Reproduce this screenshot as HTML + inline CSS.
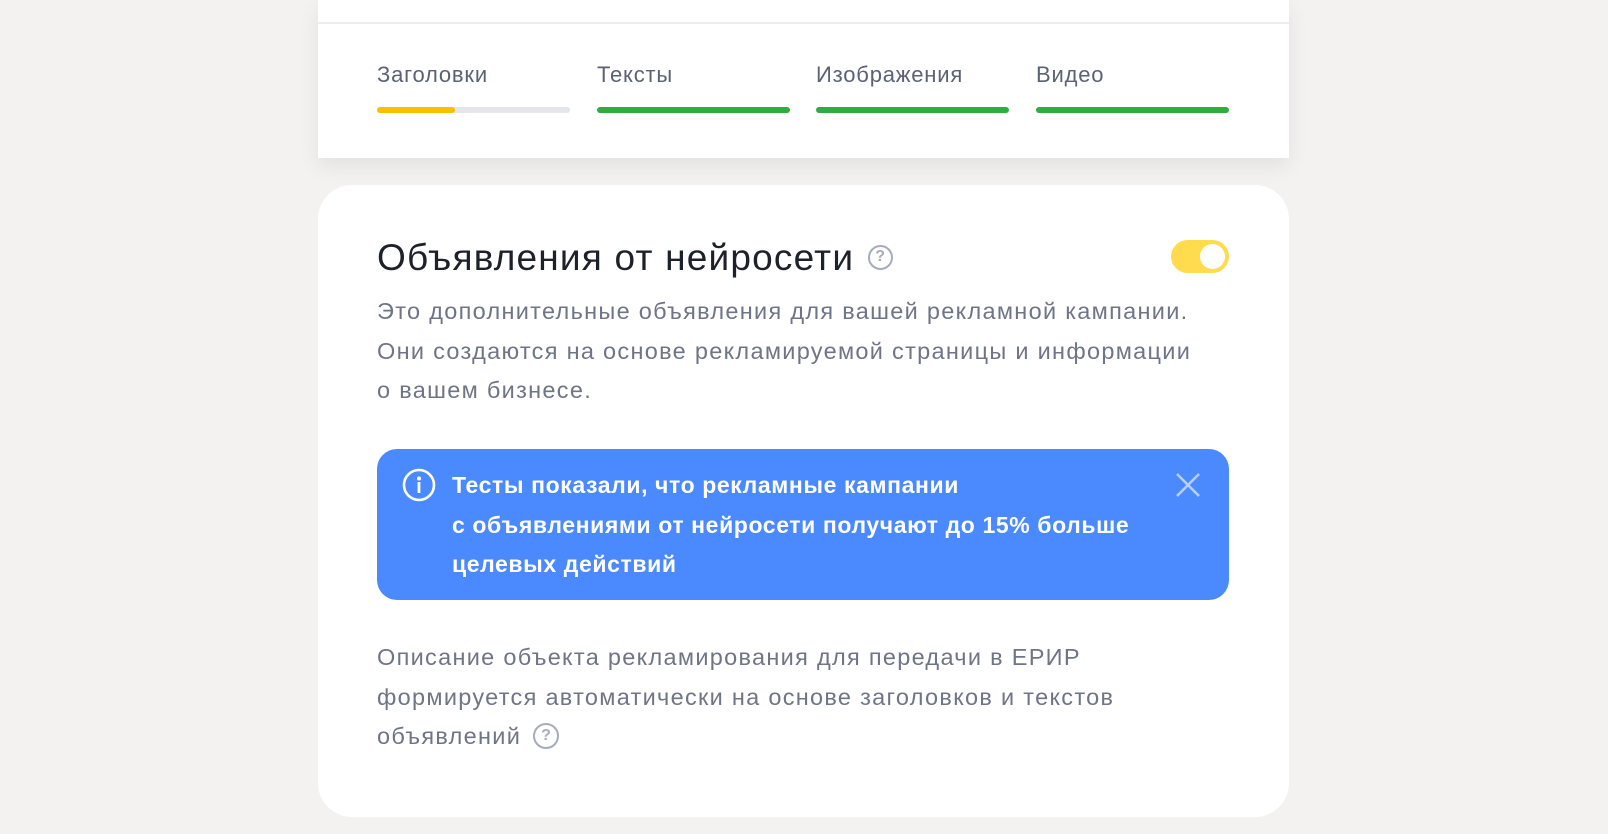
<!DOCTYPE html>
<html><head><meta charset="utf-8"><style>
*{margin:0;padding:0;box-sizing:border-box}
body{width:1608px;height:834px;background:#f4f1f1;font-family:"Liberation Sans",sans-serif;position:relative;overflow:hidden}
.tabs{position:absolute;left:318px;top:0;width:971px;height:158px;background:#fff;box-shadow:0 8px 20px rgba(0,0,0,0.07)}
.tabs .sep{position:absolute;left:0;right:0;top:22px;height:2px;background:#eeeef0}
.tab{position:absolute;top:62px;width:193px;font-size:22px;letter-spacing:0.8px;color:#5b6275}
.tab .bar{position:absolute;top:45px;left:0;width:193px;height:6px;border-radius:3px;background:#e4e6ec}
.card{position:absolute;left:318px;top:185px;width:971px;height:632px;background:#fff;border-radius:34px}
.title{position:absolute;left:59px;top:52px;font-size:37px;letter-spacing:1.2px;color:#1d2129;white-space:nowrap}
.q{display:inline-block;vertical-align:middle;border:2.5px solid #a5acbc;border-radius:50%;color:#a5acbc;text-align:center;font-weight:bold;letter-spacing:0}
.toggle{position:absolute;left:853px;top:55px;width:58px;height:33px;border-radius:17px;background:#ffdb4d}
.toggle:after{content:"";position:absolute;right:4px;top:4px;width:25px;height:25px;border-radius:50%;background:#fff}
.desc{position:absolute;left:59px;font-size:23.5px;letter-spacing:1.3px;line-height:39.5px;color:#6e7587;white-space:nowrap}
.banner{position:absolute;left:59px;top:264px;width:852px;height:151px;border-radius:20px;background:#4a89fe;color:#fff}
.banner .txt{position:absolute;left:75px;top:17px;font-size:23px;line-height:39.5px;font-weight:bold;letter-spacing:0.6px;white-space:nowrap}
</style></head><body>
<div class="tabs"><div class="sep"></div>
<div class="tab" style="left:59px">Заголовки<div class="bar"><div style="width:78px;height:6px;border-radius:3px;background:#f7c100"></div></div></div>
<div class="tab" style="left:279px">Тексты<div class="bar" style="background:#2fae3f"></div></div>
<div class="tab" style="left:498px">Изображения<div class="bar" style="background:#2fae3f"></div></div>
<div class="tab" style="left:718px">Видео<div class="bar" style="background:#2fae3f"></div></div>
</div>
<div class="card">
<div class="title">Объявления от нейросети <span class="q" style="width:25px;height:25px;font-size:16px;line-height:20px;margin-left:2px;margin-top:-6px">?</span></div>
<div class="toggle"></div>
<div class="desc" style="top:107px">Это дополнительные объявления для вашей рекламной кампании.<br>Они создаются на основе рекламируемой страницы и информации<br>о вашем бизнесе.</div>
<div class="banner">
<svg style="position:absolute;left:25px;top:19px" width="34" height="34" viewBox="0 0 34 34"><circle cx="17" cy="17" r="15" fill="none" stroke="#fff" stroke-width="2.6"/><circle cx="17" cy="10.5" r="2" fill="#fff"/><rect x="15.6" y="14" width="2.8" height="11" fill="#fff"/></svg>
<div class="txt">Тесты показали, что рекламные кампании<br>с объявлениями от нейросети получают до 15% больше<br>целевых действий</div>
<svg style="position:absolute;left:798px;top:23px" width="26" height="26" viewBox="0 0 26 26"><path d="M2 2L24 24M24 2L2 24" stroke="#b9d0ff" stroke-width="2.6"/></svg>
</div>
<div class="desc" style="top:453px">Описание объекта рекламирования для передачи в ЕРИР<br>формируется автоматически на основе заголовков и текстов<br>объявлений <span class="q" style="width:26px;height:26px;font-size:16px;line-height:21px;margin-left:4px;margin-top:-4px">?</span></div>
</div>
</body></html>
